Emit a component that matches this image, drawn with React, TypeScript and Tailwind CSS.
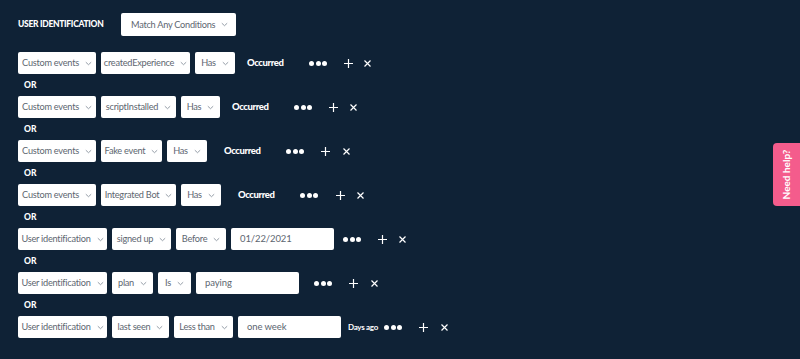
import { ReactNode } from "react";

type Cell =
  | { kind: "select"; label: string; w: number }
  | { kind: "input"; value: string };

interface Rule {
  cells: Cell[];
  suffix?: { text: string; ml: number; w: number; bold?: boolean };
  dotsMl: number;
  plusMl: number;
  closeMl: number;
}

const sel = (label: string, w: number): Cell => ({ kind: "select", label, w });
const inp = (value: string): Cell => ({ kind: "input", value });

const rules: Rule[] = [
  {
    cells: [sel("Custom events", 78), sel("createdExperience", 89), sel("Has", 40)],
    suffix: { text: "Occurred", ml: 12, w: 33, bold: true },
    dotsMl: 29,
    plusMl: 17,
    closeMl: 11,
  },
  {
    cells: [sel("Custom events", 78), sel("scriptInstalled", 75), sel("Has", 39)],
    suffix: { text: "Occurred", ml: 12, w: 33, bold: true },
    dotsMl: 29,
    plusMl: 17,
    closeMl: 12,
  },
  {
    cells: [sel("Custom events", 78), sel("Fake event", 61), sel("Has", 40)],
    suffix: { text: "Occurred", ml: 17, w: 34, bold: true },
    dotsMl: 28,
    plusMl: 17,
    closeMl: 13,
  },
  {
    cells: [sel("Custom events", 78), sel("Integrated Bot", 75), sel("Has", 40)],
    suffix: { text: "Occurred", ml: 17, w: 33, bold: true },
    dotsMl: 29,
    plusMl: 18,
    closeMl: 12,
  },
  {
    cells: [sel("User identification", 89), sel("signed up", 59), sel("Before", 50), inp("01/22/2021")],
    dotsMl: 9,
    plusMl: 17,
    closeMl: 12,
  },
  {
    cells: [sel("User identification", 89), sel("plan", 41), sel("Is", 33), inp("paying")],
    dotsMl: 15,
    plusMl: 17,
    closeMl: 13,
  },
  {
    cells: [sel("User identification", 89), sel("last seen", 57), sel("Less than", 59), inp("one week")],
    suffix: { text: "Days ago", ml: 7, w: 28 },
    dotsMl: 8,
    plusMl: 17,
    closeMl: 13,
  },
];

function Chevron() {
  return (
    <svg width="7" height="5" viewBox="0 0 7 5" className="ml-[6px] shrink-0">
      <path d="M0.8 1.2 L3.5 3.7 L6.2 1.2" fill="none" stroke="#8a939e" strokeWidth="0.9" />
    </svg>
  );
}

function SelectBox({ label, w }: { label: string; w: number }) {
  return (
    <div
      className="flex h-[22px] shrink-0 items-center justify-center overflow-hidden rounded-[2px] bg-white text-[9.2px] tracking-[-0.25px] text-[#5d6670]"
      style={{ width: w }}
    >
      <span className="whitespace-nowrap">{label}</span>
      <Chevron />
    </div>
  );
}

function InputBox({ value }: { value: string }) {
  return (
    <div className="flex h-[22px] w-[103px] shrink-0 items-center rounded-[2px] bg-white pl-[9px] text-[9.5px] tracking-[-0.1px] text-[#5d6670]">
      {value}
    </div>
  );
}

function Dots({ ml }: { ml: number }) {
  return (
    <div className="flex items-center gap-[1.5px]" style={{ marginLeft: ml }}>
      <span className="h-[5px] w-[5px] rounded-full bg-white" />
      <span className="h-[5px] w-[5px] rounded-full bg-white" />
      <span className="h-[5px] w-[5px] rounded-full bg-white" />
    </div>
  );
}

function Plus({ ml }: { ml: number }) {
  return (
    <svg width="9" height="9" viewBox="0 0 9 9" style={{ marginLeft: ml }}>
      <path d="M4.5 0 V9 M0 4.5 H9" stroke="white" strokeWidth="1.2" />
    </svg>
  );
}

function Close({ ml }: { ml: number }) {
  return (
    <svg width="7" height="7" viewBox="0 0 7 7" style={{ marginLeft: ml }}>
      <path d="M0.5 0.5 L6.5 6.5 M6.5 0.5 L0.5 6.5" stroke="white" strokeWidth="1.2" />
    </svg>
  );
}

function RuleRow({ rule }: { rule: Rule }) {
  return (
    <div className="flex h-[22px] items-center">
      <div className="flex items-center gap-[5px]">
        {rule.cells.map((c, i) =>
          c.kind === "select" ? (
            <SelectBox key={i} label={c.label} w={c.w} />
          ) : (
            <InputBox key={i} value={c.value} />
          )
        )}
      </div>
      {rule.suffix && (
        <span
          className={`shrink-0 whitespace-nowrap text-white ${
            rule.suffix.bold
              ? "text-[9.5px] font-black tracking-[-0.4px]"
              : "text-[8px] font-bold tracking-[-0.3px]"
          }`}
          style={{ marginLeft: rule.suffix.ml, width: rule.suffix.w }}
        >
          {rule.suffix.text}
        </span>
      )}
      <Dots ml={rule.dotsMl} />
      <Plus ml={rule.plusMl} />
      <Close ml={rule.closeMl} />
    </div>
  );
}

function OrLabel(): ReactNode {
  return (
    <div className="flex h-[22px] items-center pl-[6px] text-[8.5px] font-black text-white">OR</div>
  );
}

export default function App() {
  return (
    <div
      className="relative h-[359px] w-[800px] overflow-hidden bg-[#0f2236] pl-[18px] pt-[13px]"
      style={{ fontFamily: "Lato, 'Noto Sans', sans-serif" }}
    >
      <div className="flex h-[23px] items-center">
        <span className="w-[103px] whitespace-nowrap text-[8.5px] font-black tracking-[-0.3px] text-white">
          USER IDENTIFICATION
        </span>
        <div className="flex h-[23px] w-[115px] items-center justify-between rounded-[2px] bg-white pl-[10px] pr-[8px] text-[9.2px] tracking-[-0.25px] text-[#5d6670]">
          <span className="whitespace-nowrap">Match Any Conditions</span>
          <Chevron />
        </div>
      </div>

      <div className="mt-[16px] flex flex-col">
        {rules.map((rule, i) => (
          <div key={i}>
            {i > 0 && <OrLabel />}
            <RuleRow rule={rule} />
          </div>
        ))}
      </div>

      <div className="absolute right-0 top-[143px] flex h-[63px] w-[27px] items-center justify-center rounded-l-[4px] bg-[#f45c8c]">
        <span className="-rotate-90 whitespace-nowrap text-[10px] font-bold text-white">
          Need help?
        </span>
      </div>
    </div>
  );
}
